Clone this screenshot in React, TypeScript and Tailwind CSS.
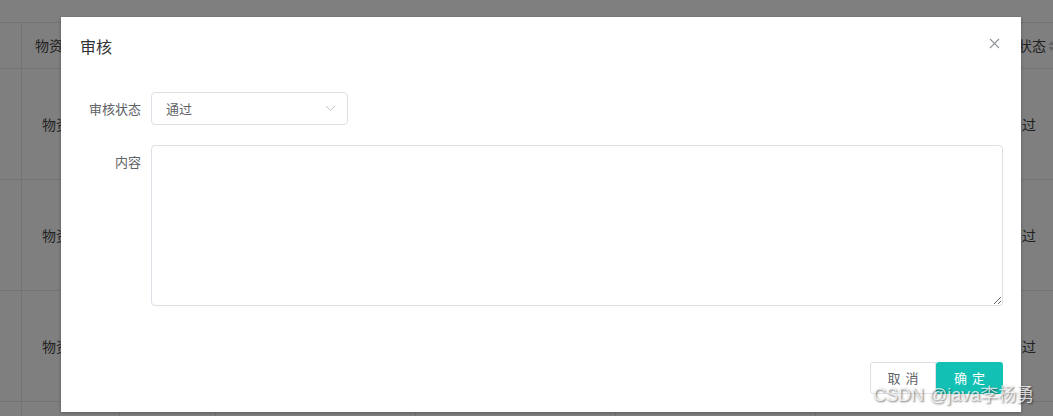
import React from "react";

const font = { fontFamily: '"Noto Sans CJK SC", "Noto Sans", sans-serif' };

function Cell({ w, children, className = "" }: { w: string; children?: React.ReactNode; className?: string }) {
  return <div className={`${w} h-full shrink-0 border-r border-[#e6e6e6] flex items-center ${className}`}>{children}</div>;
}

function Row({ h, header, last, first = "物资" }: { h: string; header?: boolean; last?: string; first?: string }) {
  return (
    <div className={`${h} flex border-b border-[#e6e6e6] text-[14px] text-[#444]`}>
      <Cell w="w-[22px]" />
      <Cell w="w-[98px]" className={header ? "pl-[13px]" : "pl-[20px]"}>
        {header ? "物资名称" : first}
      </Cell>
      <Cell w="w-[96px]" />
      <Cell w="w-[200px]" />
      <Cell w="w-[200px]" />
      <Cell w="w-[200px]" />
      <div className="w-[178px] h-full shrink-0" />
      <div className={`flex-1 min-w-0 h-full flex items-center whitespace-nowrap ${header ? "pl-[24px]" : "pl-[14px]"}`}>
        {header ? (
          <span className="flex shrink-0 items-center gap-[2px] whitespace-nowrap">
            <span>状态</span>
            <svg width="7" height="12" viewBox="0 0 7 12" className="shrink-0">
              <path d="M3.5 1 L6.5 5 L0.5 5 Z" fill="#c0c4cc" />
              <path d="M3.5 11 L6.5 7 L0.5 7 Z" fill="#c0c4cc" />
            </svg>
          </span>
        ) : (
          <span>{last}</span>
        )}
      </div>
    </div>
  );
}

export default function App() {
  return (
    <div className="relative w-[1053px] h-[416px] overflow-hidden bg-white" style={font}>
      {/* table behind */}
      <div className="flex flex-col">
        <div className="h-[23px] border-b border-[#e6e6e6]" />
        <Row h="h-[46px]" header />
        <Row h="h-[111px]" last="通过" />
        <Row h="h-[111px]" last="通过" />
        <Row h="h-[111px]" last="通过" />
        <Row h="h-[40px]" last="" first="" />
      </div>

      {/* overlay */}
      <div className="absolute inset-0 bg-black/50" />

      {/* dialog */}
      <div className="absolute left-[61px] top-[17px] w-[960px] h-[395px] bg-white flex flex-col shadow-[0_1px_3px_rgba(0,0,0,0.3)]">
        <div className="flex justify-between items-start pl-[19px] pr-[21px] pt-[17px]">
          <span className="text-[16px] leading-[24px] text-[#303133]">审核</span>
          <svg width="11" height="11" viewBox="0 0 11 11" className="mt-[4px]">
            <path d="M1 1 L10 10 M10 1 L1 10" stroke="#909399" strokeWidth="1.1" />
          </svg>
        </div>

        <div className="flex flex-col pt-[34px] pl-[20px] pr-[18px]">
          <div className="flex">
            <div className="w-[70px] pr-[10px] text-right text-[13px] leading-[33px] text-[#606266]">审核状态</div>
            <div className="w-[197px] h-[33px] border border-[#dcdfe6] rounded-[4px] flex items-center justify-between pl-[14px] pr-[11px]">
              <span className="text-[13px] text-[#606266]">通过</span>
              <svg width="11" height="7" viewBox="0 0 11 7">
                <path d="M1 1 L5.5 5.5 L10 1" stroke="#c0c4cc" strokeWidth="1" fill="none" />
              </svg>
            </div>
          </div>
          <div className="flex mt-[20px]">
            <div className="w-[70px] pr-[10px] text-right text-[13px] leading-[33px] text-[#606266]">内容</div>
            <textarea className="flex-1 h-[161px] border border-[#dcdfe6] rounded-[4px] outline-none px-[15px] py-[5px] text-[13px]" />
          </div>
        </div>

        <div className="mt-auto flex justify-end pr-[18px] pb-[18px]">
          <div className="w-[66px] h-[32px] border border-[#dcdfe6] rounded-l-[3px] flex items-center justify-center gap-[5px] text-[13px] text-[#606266]">
            <span>取</span>
            <span>消</span>
          </div>
          <div className="w-[67px] h-[32px] bg-[#12c1b4] rounded-[3px] flex items-center justify-center gap-[5px] text-[13px] text-white">
            <span>确</span>
            <span>定</span>
          </div>
        </div>
      </div>

      {/* watermark */}
      <div
        className="absolute left-[873px] top-[383px] text-[18px] leading-[24px] text-white/75 whitespace-nowrap"
        style={{ fontFamily: '"Liberation Sans", "Noto Sans CJK SC", sans-serif', textShadow: "1px 1px 2px rgba(0,0,0,0.55)" }}
      >
        CSDN @java李杨勇
      </div>
    </div>
  );
}
